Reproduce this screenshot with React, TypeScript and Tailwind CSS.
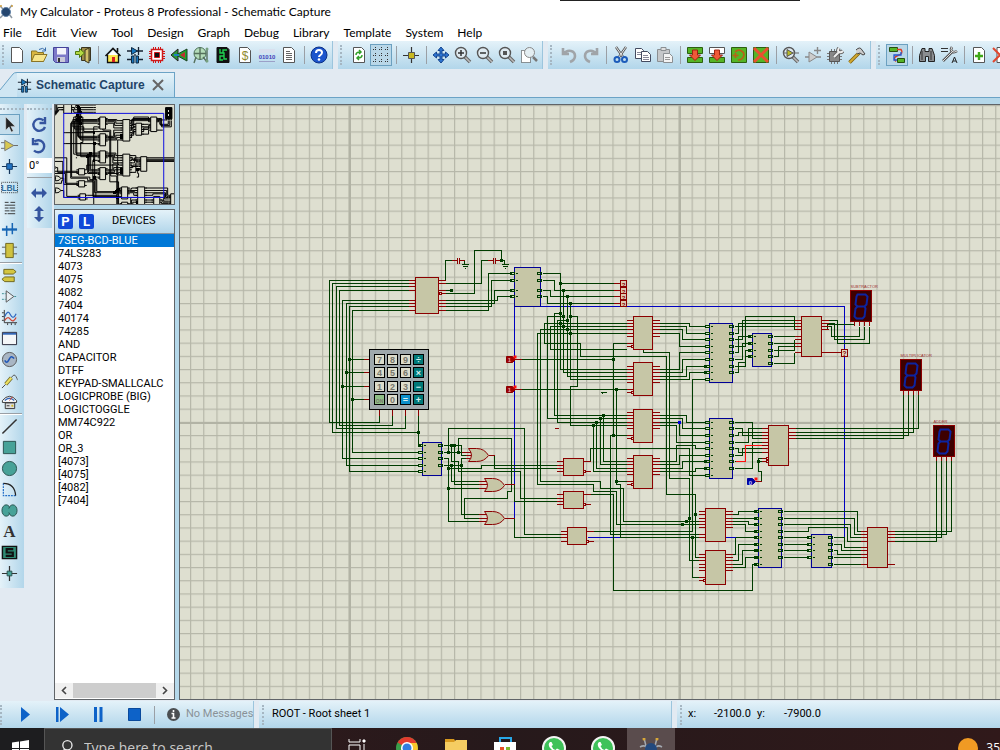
import React, { useState } from 'react';

type Chip = { x: number; y: number; w: number; h: number; left: number[]; right: number[] };

// Schematic parts, in sheet coordinates
const ROWS_9 = [326, 333, 339, 346, 352, 359, 366, 372, 379];
const ROWS_H = [422, 428, 435, 442, 448, 455, 461, 468, 475];
const ROWS_K = [511, 518, 524, 531, 537, 544, 550, 557, 564];

const redChips: Chip[] = [
    { x: 415, y: 277, w: 23, h: 36, left: [280, 283, 286, 290, 300, 303, 306, 310], right: [280, 283, 290, 293, 300, 303, 306, 310] },
    { x: 633, y: 316, w: 19, h: 33, left: [320, 323, 326, 329, 333, 336, 343, 346], right: [320, 323, 326, 329, 333, 336] },
    { x: 633, y: 362, w: 19, h: 33, left: [366, 369, 372, 376, 379, 382, 389, 392], right: [366, 369, 372, 376, 379, 382] },
    { x: 633, y: 409, w: 19, h: 33, left: [412, 415, 418, 422, 425, 428, 435, 438], right: [412, 415, 418, 422, 425, 428] },
    { x: 633, y: 455, w: 19, h: 33, left: [458, 461, 464, 468, 471, 474, 481, 484], right: [458, 461, 464, 468, 471, 474] },
    { x: 801, y: 316, w: 20, h: 40, left: [320, 323, 326, 329, 336, 339, 343, 346, 352], right: [320, 323, 326, 329, 352] },
    { x: 768, y: 425, w: 20, h: 40, left: [428, 432, 435, 438, 442, 445, 448, 452, 458, 461], right: [428, 432, 435, 438] },
    { x: 705, y: 508, w: 20, h: 33, left: [511, 514, 518, 521, 524, 527, 534, 537], right: [511, 514, 518, 521, 524, 527] },
    { x: 705, y: 550, w: 20, h: 34, left: [554, 557, 560, 564, 567, 570, 577, 580], right: [554, 557, 560, 564, 567, 570] },
    { x: 867, y: 527, w: 20, h: 40, left: [531, 534, 537, 541, 547, 550, 554, 557, 564], right: [531, 534, 537, 541, 564] },
    { x: 563, y: 458, w: 20, h: 17, left: [461, 465, 468, 471], right: [461, 471] },
    { x: 563, y: 491, w: 20, h: 17, left: [494, 498, 501, 504], right: [494, 504] },
    { x: 567, y: 527, w: 19, h: 17, left: [531, 534, 537, 541], right: [531, 541] },
];

const blueChips: Chip[] = [
    { x: 422, y: 442, w: 19, h: 33, left: [445, 452, 458, 465, 471], right: [445, 452, 458, 465] },
    { x: 514, y: 267, w: 26, h: 39, left: [273, 280, 290, 296], right: [273, 280, 290, 296] },
    { x: 709, y: 323, w: 23, h: 59, left: ROWS_9, right: ROWS_9.slice(0, 8) },
    { x: 752, y: 333, w: 19, h: 33, left: [336, 343, 350, 356], right: [336, 343, 350, 356, 363] },
    { x: 709, y: 418, w: 23, h: 60, left: ROWS_H, right: ROWS_H.slice(0, 8) },
    { x: 758, y: 508, w: 23, h: 59, left: ROWS_K, right: ROWS_K.slice(0, 8) },
    { x: 811, y: 534, w: 20, h: 33, left: [537, 544, 550, 557], right: [537, 544, 550, 557, 564] },
];

const wires = [
    // keypad bus
    'M408 280H329V422H379V415', 'M408 283H332V432H418', 'M408 286H336V428H405V415', 'M408 290H339V425H392V415',
    'M408 300H342V458H418', 'M408 303H346V465H418', 'M408 306H349V471H418', 'M408 310H352V452H418',
    'M349 359H363', 'M346 372H363', 'M342 386H363', 'M352 399H363', 'M418 415V445H420',
    // encoder outputs
    'M445 280V260H451', 'M445 283H481V260H487', 'M501 260V250H474V293H442', 'M445 290H451', 'M501 260H504V264', 'M464 260V264',
    'M445 300H497V296H511', 'M445 303H494V290H511', 'M445 306H491V280H511', 'M445 310H488V273H511',
    'M543 273H560V369H626', 'M560 283H613', 'M543 280H554V290H613', 'M543 290H550V296H613', 'M543 296H547V303H613',
    'M563 290V372H626', 'M567 296V376H626', 'M570 303V379H626',
    // operand buses
    'M626 323H544V343H580V356H666V494H695V557H699', 'M626 326H550V349H626', 'M643 349V352H669V478H689V560H699',
    'M626 329H540V481H600V488H623V521H699', 'M626 333H537V484H593V491H616V524H699',
    'M560 313H554V415H626', 'M567 320H557V422H626', 'M563 316H547V418H626', 'M570 316H577V386H570V425H626',
    'M521 359H613', 'M626 343H613V435', 'M521 389H626', 'M616 389V481H626', 'M626 435H610V534H699', 'M616 481V484H620V537H699',
    'M603 415V461H626', 'M600 418V464H626', 'M596 422V468H626', 'M593 425V471H626',
    // subtractor
    'M659 323H689V326H705', 'M659 326H686V333H705', 'M659 329H682V339H705', 'M659 333H679V346H705',
    'M659 369H679V352H705', 'M659 372H682V359H705', 'M659 376H686V366H705', 'M659 379H689V372H705',
    'M705 379H692V531H593', 'M692 537V577H699',
    'M735 326H794', 'M735 333H738V323H794', 'M735 339H742V320H794', 'M735 346H745V316H794V329',
    'M735 352H738V336H750', 'M735 359H742V343H750', 'M735 366H738V362H745V350H750', 'M735 372H738V366H745V356H750',
    'M774 336H794', 'M774 343H794', 'M774 350H794V339', 'M774 356H778V346H794', 'M774 363H794V352',
    'M827 320H837V343H869V326', 'M827 323H834V339H864V326', 'M827 326H831V336H859V326', 'M827 329V324H854',
    // multiplicator
    'M659 415H686V422H705', 'M659 418H682V428H705', 'M659 422H679V435H705', 'M659 425H676V442H705',
    'M659 461H676V445H695V448H705', 'M659 464H679V455H705', 'M659 468H682V461H705', 'M659 471H695V468H705',
    'M705 475H689V448H590V461',
    'M735 422H752V438H761', 'M735 428H742V435H761', 'M735 435H738V432H761', 'M735 442H748V428H761',
    'M735 448H738V452H761', 'M735 455H742V448H761', 'M735 468H752V442H761', 'M765 458H758V471H761V481', 'M758 461H765',
    'M794 428H918V394', 'M794 432H913V394', 'M794 435H908V394', 'M794 438H903V394',
    // adder
    'M732 514H738V511H756', 'M732 518H756', 'M732 521H748V524H756', 'M732 524H745V531H756', 'M735 537H756',
    'M732 554H735V537', 'M732 560H738V544H756', 'M732 564H742V550H756', 'M732 567H745V557H756',
    'M590 494H613V590H752V564H756',
    'M784 511H857V531H860', 'M784 518H854V534H860', 'M784 524H850V537H860', 'M784 531H808V527H847V541H860',
    'M784 537H808', 'M784 544H808', 'M784 550H808', 'M784 557H808',
    'M834 537H844V547H860', 'M834 544H841V550H860', 'M834 550H837V554H860', 'M834 557H860', 'M834 564H860',
    'M893 531H951V460', 'M893 534H946V460', 'M893 537H941V460', 'M893 541H936V460',
    // operator selection
    'M444 445H461V455H465', 'M444 452H461', 'M448 452V428H524V534H560', 'M458 452V438H511V491H507V498H464V518H478',
    'M444 458H448V521H478', 'M448 488H478', 'M444 465H461', 'M465 458H461V514H478', 'M454 445V484H478', 'M451 465V481H478',
    'M451 445V461H458V471H520V498H558', 'M494 455V468H558', 'M448 468H481V465H558', 'M514 484V501H558', 'M514 518V537H560',
].join('');

const redWires = [
    'M363 359H369M363 372H369M363 386H369M363 399H369', 'M379 409V415M392 409V415M405 409V415M418 409V415',
    'M451 260H457M457 257V263M459 257V263M459 260H464', 'M487 260H493M493 257V263M495 257V263M495 260H501',
    'M613 283H620M613 290H620M613 296H620M613 303H620', 'M514 359H521M514 389H521',
    'M854 321V325M859 321V325M864 321V325M869 321V325', 'M903 390V394M908 390V394M913 390V394M918 390V394',
    'M936 456V460M941 456V460M946 456V460M951 456V460', 'M827 352H841', 'M755 481H761', 'M554 428H558',
    'M461 452H471M465 455H472M465 458H471M488 455H494', 'M478 481H487M478 484H488M478 488H487M504 484H514',
    'M478 514H487M478 518H488M478 521H487M504 518H514',
].join('');

const dots = [
    [349, 359], [346, 372], [342, 386], [352, 399], [418, 432], [451, 290], [501, 260],
    [560, 283], [563, 290], [567, 296], [570, 303], [560, 313], [563, 316], [567, 320], [570, 316],
    [560, 323], [563, 326], [567, 329], [570, 333], [613, 359], [616, 389], [613, 435], [616, 481],
    [603, 415], [600, 418], [596, 422], [593, 425], [705, 366], [705, 372], [705, 461], [705, 468],
    [695, 514], [689, 518], [686, 521], [682, 524], [692, 537], [756, 550], [756, 557], [758, 461],
    [448, 452], [458, 452], [451, 445], [454, 445], [451, 465], [461, 465], [448, 468], [448, 488],
];

const displays = [
    { x: 850, y: 290, label: 'SUBTRACTOR' },
    { x: 900, y: 359, label: 'MULTIPLICATOR' },
    { x: 933, y: 425, label: 'ADDER' },
];

const keys = ['7', '8', '9', '÷', '4', '5', '6', '×', '1', '2', '3', '−', 'ON', '0', '=', '+'];

const keyFill = (key: string) => {
    if (key === 'ON') return '#8fbf87';
    if (key === '=') return '#0c8fc9';
    return '÷×−+'.includes(key) ? '#007878' : '#dcdccb';
};

const orGates = [[468, 448], [484, 478], [484, 511]];

const Circuit: React.FC = () => (
    <g transform="translate(-179.5 -104.5)" fill="none" fontFamily="Liberation Sans, sans-serif">
        <g shapeRendering="crispEdges" strokeWidth="1">
            <path d="M514 518V306H844V537M725 537H735M587 537H620" stroke="#0000c0" />
            <path d={wires} stroke="#003c00" />
            <path d="M735 461H745V445H761" stroke="#ff1010" />
            <path d={redWires} stroke="#8b0000" />
            <path d="M461 264H468M462 266H467M464 268H465M501 264H508M502 266H507M504 268H505" stroke="#003c00" />
            {redChips.map((c, i) => (
                <g key={i} stroke="#8b0000">
                    <rect x={c.x} y={c.y} width={c.w} height={c.h} fill="#c6c6a6" />
                    <path d={c.left.map((y) => `M${c.x - 7} ${y}H${c.x}`).join('')} />
                    <path d={c.right.map((y) => `M${c.x + c.w} ${y}h7`).join('')} />
                </g>
            ))}
            {blueChips.map((c, i) => (
                <g key={i}>
                    <rect x={c.x} y={c.y} width={c.w} height={c.h} fill="#c6c6a6" stroke="#000096" />
                    {c.left.map((y) => <path key={y} d={`M${c.x - 4} ${y - 1}h4v2h-4zM${c.x + 1} ${y}h2`} stroke="#003c00" />)}
                    {c.right.map((y) => <path key={y} d={`M${c.x + c.w - 3} ${y - 1}h4v2h-4zM${c.x + c.w + 2} ${y}h1`} stroke="#003c00" />)}
                </g>
            ))}
            <g stroke="#8b0000" fill="#dedfd0">
                <path d="M439 292h2v2h-2zM631 345h2v2h-2zM631 391h2v2h-2zM631 437h2v2h-2zM631 483h2v2h-2zM583 470h2v2h-2zM583 503h2v2h-2zM586 540h2v2h-2zM703 579h2v2h-2zM766 457h2v2h-2zM766 460h2v2h-2z" />
            </g>
            {dots.map(([x, y]) => <rect key={`${x}-${y}`} x={x - 1.5} y={y - 1.5} width="3" height="3" fill="#003c00" />)}
            <rect x="677.5" y="420.5" width="3" height="3" fill="#0000e0" />
            <path d="M600 392h6M602 391v2" stroke="#003c00" />
            <rect x="369" y="349" width="59" height="60" fill="#9fa8ac" stroke="#000" />
        </g>
        {orGates.map(([x, y]) => (
            <path key={`${x}-${y}`} d={`M${x} ${y}h8q8 0 12 7q-4 6-12 6h-8q6-6 0-13z`} fill="#c6c6a6" stroke="#8b0000" />
        ))}
        {keys.map((key, i) => {
            const x = 374 + (i % 4) * 13;
            const y = [354, 367, 381, 394][Math.floor(i / 4)];
            const dark = '÷×−+='.includes(key);
            return (
                <g key={key}>
                    <rect x={x} y={y} width="10" height="10" fill={keyFill(key)} stroke="#000" shapeRendering="crispEdges" />
                    <text x={x + 5} y={y + 8} fontSize={key === 'ON' ? 5 : 9} fontWeight="bold" textAnchor="middle" fill={dark ? '#d8f0f0' : '#77776c'}>{key}</text>
                </g>
            );
        })}
        {[280, 287, 293, 300].map((y) => (
            <g key={y}>
                <rect x="620" y={y} width="6" height="6" fill="#dcc8b0" stroke="#8b0000" shapeRendering="crispEdges" />
                <text x="623" y={y + 6} fontSize="6" fontWeight="bold" textAnchor="middle" fill="#8b0000">?</text>
            </g>
        ))}
        <rect x="841" y="349" width="6" height="7" fill="#e0d8c0" stroke="#8b0000" shapeRendering="crispEdges" />
        <text x="844" y="355" fontSize="7" fontWeight="bold" textAnchor="middle" fill="#8b0000">?</text>
        {[359, 389].map((y) => (
            <g key={y}>
                <path d={`M506 ${y - 3}h6l3 3l-3 3h-6z`} fill="#a00000" stroke="#8b0000" />
                <text x="509" y={y + 2} fontSize="6" fontWeight="bold" textAnchor="middle" fill="#e0a0a0">1</text>
                <rect x="513" y={y - 4} width="3" height="3" fill="#ff1010" />
            </g>
        ))}
        <path d="M747 478h5l3 3l-3 3h-5z" fill="#0000a0" stroke="#0000a0" />
        <text x="750" y="484" fontSize="6" fontWeight="bold" textAnchor="middle" fill="#c0c0ff">0</text>
        <rect x="754" y="477" width="3" height="3" fill="#ff1010" />
        {displays.map((d) => (
            <g key={d.label}>
                <rect x={d.x} y={d.y} width="21" height="31" fill="#3e0000" stroke="#8b0000" shapeRendering="crispEdges" />
                <path d={`M${d.x + 7} ${d.y + 4}h8l2 2l-1 8l-2 2l1 2l-1 8l-2 2h-6l-2-2l1-8l2-2l-2-2l1-8zM${d.x + 7} ${d.y + 16}h7`} stroke="#0c24a0" strokeWidth="2" />
                <text x={d.x} y={d.y - 3} fontSize="4" fill="#9c3030">{d.label}</text>
            </g>
        ))}
    </g>
);

const Overview: React.FC = () => (
    <svg className="block h-full w-full bg-[#dedfd0]" fill="none" stroke="#000" shapeRendering="crispEdges">
        <g transform="translate(-147 -103) scale(.303 .364)">
            <path d={wires} vectorEffect="non-scaling-stroke" />
            <path d={redWires} vectorEffect="non-scaling-stroke" />
            {[...redChips, ...blueChips].map((c, i) => (
                <g key={i}>
                    <rect x={c.x} y={c.y} width={c.w} height={c.h} fill="#dedfd0" vectorEffect="non-scaling-stroke" />
                    <path d={[...c.left.map((y) => `M${c.x - 7} ${y}h7`), ...c.right.map((y) => `M${c.x + c.w} ${y}h7`)].join('')} vectorEffect="non-scaling-stroke" />
                </g>
            ))}
            {dots.map(([x, y], i) => <rect key={i} x={x - 4} y={y - 4} width="8" height="8" fill="#000" stroke="none" />)}
            {displays.map((d) => (
                <g key={d.label}>
                    <rect x={d.x} y={d.y} width="21" height="31" fill="#000" vectorEffect="non-scaling-stroke" />
                    <path d={`M${d.x + 7} ${d.y + 8}h6v5h-6zM${d.x + 7} ${d.y + 18}h6v5h-6z`} fill="#dedfd0" stroke="none" />
                </g>
            ))}
            {orGates.map(([x, y]) => <path key={y} d={`M${x} ${y}h8q8 0 12 7q-4 6-12 6h-8q6-6 0-13z`} vectorEffect="non-scaling-stroke" />)}
            <path d="M514 306H844V537H514z" stroke="#1010e0" vectorEffect="non-scaling-stroke" />
        </g>
    </svg>
);

const Svg: React.FC<{ size?: number; children: React.ReactNode }> = ({ size = 18, children }) => (
    <svg width={size} height={size} viewBox="0 0 18 18" fill="none" aria-hidden="true">{children}</svg>
);

const page = <path d="M3.500 1.500h8l3 3v12h-11z" fill="#fff" stroke="#555" />;
const lens = <><path d="M11 11l5 5" stroke="#666" strokeWidth="3.500" /><path d="M11 11l5 5" stroke="#bbb" strokeWidth="1.500" /><circle cx="7" cy="7" r="5.500" fill="#dfeaf0" stroke="#555" strokeWidth="1.400" /></>;
const darkCap = <><path d="M1 5h16M12.500 1v8M1 13.500h5M12 13.500h5M9 8v2" stroke="#152030" strokeWidth="1.300" /><path d="M5.500 1.500v7l6-3.500z" fill="#1878c0" stroke="#102840" /><path d="M5.500 10h2.500v7H5.500zM10 10h2.500v7H10z" fill="#1878c0" stroke="#102840" /></>;

const icons: Record<string, React.ReactNode> = {
    'New Project': page,
    'Open Project': <><path d="M1.500 15.500V5h5l1 1.500h6v9z" fill="#d9b640" stroke="#8a7426" /><path d="M1.500 15.500l3-7H17l-3.500 7z" fill="#f7e58b" stroke="#8a7426" /><path d="M9 3.500q4-2.500 6 .5M15.500 1.500V5H12" stroke="#386aa8" /></>,
    'Save Project': <><path d="M1.500 1.500h15v15h-13l-2-2z" fill="#7d7ac8" stroke="#45439a" /><path d="M5 2h9v6.500H5z" fill="#f4f4fb" /><path d="M5 11h8v5H5z" fill="#c9c9d8" /><path d="M6 12h2v4H6z" fill="#333" /></>,
    'Close Project': <><path d="M7.500 1.500h9v13h-9z" fill="#9c8c48" stroke="#3a3420" /><path d="M11 4l4-2v15l-4-2z" fill="#d2c06a" stroke="#3a3420" /><path d="M1.500 5.500h4V2.500l5 4.500-5 4.500V8.500h-4z" fill="#b4d844" stroke="#4f7a10" /></>,
    Home: <><path d="M9 4.500l-5 5h10z" fill="#fff" /><path d="M3.500 9V16.500h11V9" fill="#fbe850" stroke="#111" strokeWidth="1.300" /><path d="M1.500 10L9 2.500l7.500 7.500M13.500 2v4" stroke="#111" strokeWidth="1.600" /><path d="M8 11h3v5H8z" fill="#d82020" /></>,
    'Schematic Capture': darkCap,
    'PCB Layout': <><path d="M5.500 1v16M7.500 1v16M10.500 1v16M12.500 1v16M1 5.500h16M1 7.500h16M1 10.500h16M1 12.500h16" stroke="#d01818" /><path d="M3.500 3.500h11v11h-11z" fill="#fff" stroke="#d01818" strokeWidth="1.500" /><path d="M6.500 6.500h5v5h-5z" fill="#111" stroke="#d01818" /></>,
    '3D Visualizer': <><path d="M1 9l7-6v12z" fill="#2a9c38" stroke="#222" /><path d="M6 9L17 3v12z" fill="#20a52c" stroke="#1a4020" /><path d="M10 9l5-3v6z" fill="#c03030" /><path d="M4 9h5" stroke="#2080c0" strokeWidth="2" /></>,
    'Gerber Viewer': <><circle cx="8" cy="7.500" r="6" fill="#b4dcba" stroke="#4b7158" /><path d="M8 1.500v12M2 7.500h12M4 11l-2 6M11 11l4 5M15 2v12" stroke="#55705c" strokeWidth="1.400" /><circle cx="15" cy="3" r="1.500" fill="#77a080" /><circle cx="15" cy="15" r="1.500" fill="#77a080" /></>,
    'Design Explorer': <><path d="M3 1.500h10l2 2v13H3z" fill="#111" stroke="#111" /><path d="M6 3v4h4v3H6v4h3M9 7V4h4M10 10v3h3" stroke="#20d050" strokeWidth="1.400" /></>,
    'Bill of Materials': <>{page}<text x="9" y="14" fontSize="12" fontFamily="Liberation Sans, sans-serif" textAnchor="middle" fill="#908a30">$</text></>,
    'Source Code': <><path d="M1 3h16v4H1z" fill="#d8e0ee" /><path d="M1 15.500h16" stroke="#9ba0c8" /><text x="9" y="13" fontSize="6" fontFamily="Liberation Sans, sans-serif" fontWeight="bold" textAnchor="middle" fill="#4340b8">01010</text></>,
    'Project Notes': <>{page}<path d="M6 5.500h4M6 7.500h6M6 9.500h6M6 11.500h6M6 13.500h6" stroke="#666" /></>,
    Help: <><circle cx="9" cy="9" r="8" fill="#1c55cc" stroke="#0b3186" /><path d="M6 7q0-3 3-3t3 2.500q0 1.500-1.500 2.500T9 11" stroke="#fff" strokeWidth="2" /><circle cx="9" cy="13.500" r="1.300" fill="#fff" /></>,
    'Redraw Display': <>{page}<path d="M6 9q0-3 4-3M9 4l2 2-2 2M12 9q0 3-4 3M9 10l-2 2 2 2" stroke="#30a028" strokeWidth="1.500" /></>,
    'Toggle Grid': <path d="M1 3.500h16M1 9.500h16M1 15.500h16M3.500 1v16M9.500 1v16M15.500 1v16" stroke="#333" strokeDasharray="1 1 1 3" />,
    'Toggle Origin': <><path d="M9.500 1v16M1 9.500h16" stroke="#333" strokeWidth="1.200" /><path d="M6.500 6.500h6v6h-6z" fill="#c8b820" stroke="#555" /></>,
    Pan: <path d="M9 1l3 3.500h-2V8h3.500V6L17 9l-3.500 3v-2H10v3.500h2L9 17l-3-3.500h2V10H4.500v2L1 9l3.500-3v2H8V4.500H6z" fill="#2d74d2" stroke="#16468e" />,
    'Zoom In': <>{lens}<path d="M4 7h6M7 4v6" stroke="#333" strokeWidth="1.500" /></>,
    'Zoom Out': <>{lens}<path d="M4 7h6" stroke="#333" strokeWidth="1.500" /></>,
    'Zoom All': <>{lens}<path d="M5 5h4v4H5z" fill="#555" /></>,
    'Zoom Area': <><path d="M1.500 4.500h9v12h-9z" fill="#fff" stroke="#333" strokeDasharray="1 1" /><path d="M13 11l4 4" stroke="#777" strokeWidth="2.500" /><circle cx="9.500" cy="6.500" r="5" fill="#e4eef2" stroke="#888" /></>,
    Undo: <path d="M3 2v6h6M3.500 8q3-4 7.500-3q4 1 4 5t-5 6" stroke="#a0a4a8" strokeWidth="2.600" />,
    Redo: <path d="M15 2v6H9M14.500 8q-3-4-7.500-3q-4 1-4 5t5 6" stroke="#a0a4a8" strokeWidth="2.600" />,
    Cut: <><path d="M4 1l7 10M14 1L7 11" stroke="#555" strokeWidth="2.400" /><path d="M4 1l7 10M14 1L7 11" stroke="#e8e8e8" /><circle cx="5" cy="13.500" r="2.500" stroke="#1d5cba" strokeWidth="2" /><circle cx="12.500" cy="13.500" r="2.500" stroke="#1d5cba" strokeWidth="2" /></>,
    Copy: <><path d="M1.500 2.500h6l2 2v8h-8z" fill="#fff" stroke="#444b60" /><path d="M3 6.500h4M3 8.500h4" stroke="#889" /><path d="M7.500 5.500h6l3 3v7h-9z" fill="#fff" stroke="#444b60" /><path d="M9 9.500h5M9 11.500h6M9 13.500h6" stroke="#889" /></>,
    Paste: <><path d="M1.500 3.500h12v12h-12z" fill="#c5c7c9" stroke="#8b8f92" /><path d="M5 1.500h5v3H5z" fill="#e0e0e0" stroke="#8b8f92" /><path d="M7.500 7.500h6l3 3v6h-9z" fill="#f3f3f3" stroke="#8b8f92" /><path d="M9 11.500h5M9 13.500h5" stroke="#999" /></>,
    'Block Copy': <><path d="M1.500 1.500h15v6h-15zM1.500 11.500h15v5h-15z" fill="#55b526" stroke="#2c6010" /><path d="M6.500 4h5v5h3L9 14.500 3.500 9h3z" fill="#f05a38" stroke="#9e2410" /></>,
    'Block Move': <><path d="M1.500 1.500h15v6h-15z" fill="#fff" stroke="#555" /><path d="M1.500 11.500h15v5h-15z" fill="#55b526" stroke="#2c6010" /><path d="M6.500 4h5v5h3L9 14.500 3.500 9h3z" fill="#f05a38" stroke="#9e2410" /></>,
    'Block Rotate': <><path d="M1.500 1.500h15v15h-15z" fill="#55b526" stroke="#2c6010" /><path d="M5 6q3-3 6.500-1t2 5.500-5.500 3.500M2.500 9.500h6M5.500 7v5" stroke="#b86018" strokeWidth="1.700" /></>,
    'Block Delete': <><path d="M1.500 1.500h15v15h-15z" fill="#55b526" stroke="#2c6010" /><path d="M2 2l14 14M16 2L2 16" stroke="#ea5030" strokeWidth="3" /></>,
    'Pick Parts': <>{lens}<path d="M5 3.500v7l6-3.500z" fill="#b7ba28" stroke="#555" /><path d="M1 7h4M11 7h6" stroke="#666" /></>,
    'Make Device': <><path d="M5 6v10l8-5z" fill="#ccc" stroke="#888" /><path d="M1 11h4M13 11h4M13.500 1v7M10 4.500h7" stroke="#888" strokeWidth="1.400" /></>,
    'Packaging Tool': <><path d="M5.500 3v15M8.500 3v15M11.500 3v15M1 7.500h15M1 10.500h15M1 13.500h15" stroke="#777" /><path d="M3.500 5.500h10v10h-10z" fill="#888" stroke="#555" /><path d="M8 11l5-5M13 2q-2 3 0 4t4-1" stroke="#666" strokeWidth="4" /><path d="M8 11l5-5M13 2q-2 3 0 4t4-1" stroke="#eee" strokeWidth="2" /></>,
    Decompose: <><path d="M1.500 16.500L11 7" stroke="#80610c" strokeWidth="3.500" /><path d="M1.500 16.500L11 7" stroke="#d3aa32" strokeWidth="1.800" /><path d="M8 4q4-4 6 0l3 4-2 1-3-2-3 1" fill="#ccc" stroke="#444" /></>,
    'Wire Autorouter': <><path d="M1.500 1.500h8v4h-8zM9.500 12.500h7v4h-7z" fill="#55b526" stroke="#24500c" /><path d="M9 3.500h4q3 4-3 6t-2 6" stroke="#e03c20" strokeWidth="1.400" /><path d="M13 6v3H6v5h3" stroke="#2058d0" strokeWidth="1.300" /></>,
    'Search and Tag': <><path d="M4 2.500h3v3h4v-3h3l2.500 7v6h-6v-5h-3v5h-6v-6z" fill="#8a8d90" stroke="#222" /><path d="M4 5v9M13 5v9" stroke="#333" /></>,
    'Property Assignment': <><path d="M1 2.500h7M1 5.500h7" stroke="#333" strokeWidth="1.200" /><path d="M3 15l10-10M12 1q-2 3 0 4.500t5-.5" stroke="#555" strokeWidth="2.600" /><path d="M3 15l10-10M12 1q-2 3 0 4.500t5-.5" stroke="#ddd" /><path d="M12 17l2.500-6 2.500 6M13 15h3" stroke="#222" /></>,
    'New Root Sheet': <>{page}<path d="M9 6v8M5 10h8" stroke="#40a818" strokeWidth="2.400" /></>,
    'Delete Sheet': <><path d="M5 1.500h7v15H5z" fill="#fff" stroke="#555" /><path d="M1 2l14 14M15 2L1 16" stroke="#e04830" strokeWidth="2" /></>,
    Selection: <path d="M5 1v14l3.500-3.500L11 17l2-1-2.500-5H15z" fill="#222" stroke="#eee" strokeWidth=".5" />,
    Component: <><path d="M0 6h4M0 12h4M13 9h5" stroke="#666" /><path d="M4 3.500v11L13.500 9z" fill="#d8c850" stroke="#777" /></>,
    'Junction Dot': <><path d="M9 1v16M1 9h16" stroke="#15375c" strokeWidth="1.300" /><path d="M6 6h6v6H6z" fill="#2274c4" stroke="#153c68" /></>,
    'Wire Label': <><path d="M.5 3.500h17v11H.5z" stroke="#333" strokeDasharray="1 1" /><text x="9" y="13" fontSize="9" fontFamily="Liberation Sans, sans-serif" fontWeight="bold" textAnchor="middle" fill="#2f6c9c">LBL</text></>,
    'Text Script': <path d="M4 2.500h4M10 2.500h5M4 5.500h11M4 8.500h4M9 8.500h6M4 11.500h5M10 11.500h5M4 14.500h2M7 14.500h8" stroke="#333" />,
    Bus: <><path d="M1 9h16" stroke="#1866b4" strokeWidth="2.500" /><path d="M6 9v7M12 9V2M12 9v5M6 9V5" stroke="#1866b4" strokeWidth="1.600" /></>,
    Subcircuit: <><path d="M1 5.500h4M1 12.500h4M13 5.500h4M13 12.500h4" stroke="#555" /><path d="M5 1.500h8v15H5z" fill="#cfc240" stroke="#6b6420" /></>,
    Terminals: <path d="M3 2.500h10l3 2.500-3 2.500H3zM14 10.500H4l-3 2.500 3 2.500h10z" fill="#d4c640" stroke="#6b6420" />,
    'Device Pins': <><path d="M5.500 3v12l8-6z" fill="#e8eef2" stroke="#555" /><path d="M1 6h4M1 12h4M14 9h3" stroke="#3b8c90" strokeDasharray="2 1" /></>,
    Graph: <><path d="M3.500 1v13.500H17M1 4h2M1 8h2M1 12h2M7 15v2M11 15v2M15 15v2" stroke="#333" /><path d="M4 8q3-8 6-2t6-1" stroke="#2c66c0" strokeWidth="1.300" /><path d="M4 12q3-5 6-1t6-2" stroke="#d04030" strokeWidth="1.300" /></>,
    'Active Popup': <><path d="M1.500 2.500h15v13h-15z" fill="#f4f6f8" stroke="#223" /><path d="M2 4h14" stroke="#3568b8" strokeWidth="2" /></>,
    Generator: <><circle cx="9" cy="9" r="7.500" fill="#a9b6c4" stroke="#555" /><path d="M4 10q2 4 4 0t3-4 3 2" stroke="#2058b8" strokeWidth="1.600" /></>,
    Probe: <><path d="M1 17l4-4" stroke="#444" /><path d="M5 13l6-7" stroke="#6b6420" strokeWidth="4" /><path d="M5 13l6-7" stroke="#ecdf60" strokeWidth="2.500" /><path d="M11 6q3-5 5-1t1 3" stroke="#555" /></>,
    Instruments: <><path d="M1.500 8q7.500-9 15 0v2h-15z" fill="#fff" stroke="#333" /><path d="M4 8q5-5 10 0" stroke="#3568b8" strokeWidth="1.400" /><path d="M9 8l3-4" stroke="#d04030" /><path d="M4.500 10.500h10v6h-10z" fill="#dcdcdc" stroke="#333" /><path d="M6 13.500h3" stroke="#333" /><path d="M11 13.500h2" stroke="#d0b820" strokeWidth="2" /></>,
    Line: <path d="M1.500 16.500l15-15" stroke="#333" strokeWidth="1.600" />,
    Box: <path d="M2.500 2.500h13v13h-13z" fill="#47a298" stroke="#29504c" />,
    Circle: <circle cx="9" cy="9" r="7.500" fill="#47a298" stroke="#29504c" />,
    Arc: <><path d="M2.500 2.500v13h13" stroke="#2470c8" strokeWidth="1.300" strokeDasharray="2 1" /><path d="M2.500 2.500q12 0 13 13" stroke="#222" strokeWidth="1.300" /></>,
    'Closed Path': <><ellipse cx="5.500" cy="9" rx="4.500" ry="6" fill="#47a298" stroke="#29504c" /><ellipse cx="12.500" cy="9" rx="4.500" ry="6" fill="#47a298" stroke="#29504c" /><path d="M7 7h3v4H7z" fill="#47a298" /></>,
    Text: <text x="9" y="15" fontSize="18" fontFamily="Liberation Serif, serif" fontWeight="bold" textAnchor="middle" fill="#333">A</text>,
    Symbols: <><path d="M1.500 2.500h15v13h-15z" fill="#2f8c74" stroke="#111" strokeWidth="1.500" /><path d="M13 5.500H6v3.500h6.500v3.500H5" stroke="#111" strokeWidth="2.300" /></>,
    Markers: <><path d="M9 1v16M1 9h16" stroke="#333" strokeWidth="1.300" /><path d="M6.500 6.500h5v5h-5z" fill="#47a298" stroke="#29504c" /></>,
    'Rotate Clockwise': <path d="M13.500 4.500A6 6 0 1 0 15 11M15 1v6H9.500" stroke="#35559f" strokeWidth="2.400" />,
    'Rotate Anticlockwise': <path d="M4.500 4.500A6 6 0 1 1 4 13.500M3 1v6h5.500" stroke="#35559f" strokeWidth="2.400" />,
    'Mirror X': <path d="M1 9l5-5v3.500h6V4l5 5-5 5v-3.500H6V14z" fill="#35559f" />,
    'Mirror Y': <path d="M9 1l5 5h-3.500v6H14l-5 5-5-5h3.500V6H4z" fill="#35559f" />,
};

const toolbars = [
    { pad: 'pl-[6px]', tools: ['New Project', 'Open Project', 'Save Project', 'Close Project', '|', 'Home', 'Schematic Capture', 'PCB Layout', '3D Visualizer', 'Gerber Viewer', 'Design Explorer', 'Bill of Materials', 'Source Code', 'Project Notes', '|', 'Help'] },
    { pad: 'pl-[10px]', tools: ['Redraw Display', 'Toggle Grid', '|', 'Toggle Origin', '|', 'Pan', 'Zoom In', 'Zoom Out', 'Zoom All', 'Zoom Area'] },
    { pad: 'pl-[10px]', tools: ['Undo', 'Redo', '|', 'Cut', 'Copy', 'Paste', '|', 'Block Copy', 'Block Move', 'Block Rotate', 'Block Delete', '|', 'Pick Parts', 'Make Device', 'Packaging Tool', 'Decompose'] },
    { pad: 'pl-[10px]', tools: ['Wire Autorouter', '|', 'Search and Tag', 'Property Assignment', '|', 'New Root Sheet', 'Delete Sheet'] },
];

const modeTools = ['Selection', 'Component', 'Junction Dot', 'Wire Label', 'Text Script', 'Bus', 'Subcircuit', '|', 'Terminals', 'Device Pins', 'Graph', 'Active Popup', 'Generator', 'Probe', 'Instruments', '|', 'Line', 'Box', 'Circle', 'Arc', 'Closed Path', 'Text', 'Symbols', 'Markers'];

const menus = ['File', 'Edit', 'View', 'Tool', 'Design', 'Graph', 'Debug', 'Library', 'Template', 'System', 'Help'];

const devices = ['7SEG-BCD-BLUE', '74LS283', '4073', '4075', '4082', '7404', '40174', '74285', 'AND', 'CAPACITOR', 'DTFF', 'KEYPAD-SMALLCALC', 'LOGICPROBE (BIG)', 'LOGICTOGGLE', 'MM74C922', 'OR', 'OR_3', '[4073]', '[4075]', '[4082]', '[7404]'];

const bar = 'bg-linear-to-b from-[#e4f2f9] to-[#b2d6ea]';
const grip = 'border-l-2 border-dotted border-[#a5b6c2]';

const ProteusLogo: React.FC = () => (
    <svg width="16" height="16" viewBox="0 0 16 16" fill="none" aria-hidden="true">
        <path d="M2 2l4 4M14 1l-3 4M2 14l4-4M14 14l-3-4" stroke="#8d98a3" strokeWidth="1.500" />
        <circle cx="8" cy="8" r="4.500" fill="#25466f" stroke="#6283a8" />
        <circle cx="3" cy="2" r="1" fill="#d0a040" /><circle cx="14" cy="2" r="1" fill="#d0a040" />
    </svg>
);

const App: React.FC = () => {
    const [device, setDevice] = useState('7SEG-BCD-BLUE');
    const [mode, setMode] = useState('Selection');

    return (
        <div className="relative flex h-screen flex-col overflow-hidden bg-[#e2eaf2] font-['Liberation_Sans',sans-serif] text-xs text-black">
            <div className="absolute top-0 left-[56%] h-px w-[24%] bg-[#222]" />

            {/* Title and menu */}
            <header className="shrink-0 bg-white font-['Lato',sans-serif]">
                <div className="flex h-6 items-center gap-1">
                    <span className="-ml-[2px]"><ProteusLogo /></span>
                    <h1 className="pl-[2px] text-xs">My Calculator - Proteus 8 Professional - Schematic Capture</h1>
                </div>
                <nav className="flex h-[17px] items-center gap-[14px] pl-[3px]">
                    {menus.map((m) => <button key={m} type="button" className="leading-4">{m}</button>)}
                </nav>
            </header>

            {/* Toolbars */}
            <div className="flex h-7 shrink-0 gap-[5px] overflow-hidden">
                {toolbars.map((tb, i) => (
                    <div key={i} className={`relative flex shrink-0 items-center border-r border-[#9cc5dd] pr-[2px] ${bar} ${tb.pad}`}>
                        <span className={`absolute top-1 bottom-1 left-[2px] ${grip}`} />
                        {tb.tools.map((t, j) => t === '|' ? (
                            <span key={j} className="flex w-2 justify-center"><span className="h-[18px] w-px bg-[#9a9fa5]" /></span>
                        ) : (
                            <button
                                key={t}
                                type="button"
                                aria-label={t}
                                className={t === 'Toggle Grid' || t === 'Wire Autorouter' ? 'flex h-[22px] w-[22px] items-center justify-center border border-[#6ba0c0] bg-[#b9d7e8]' : 'flex h-[22px] w-[22px] items-center justify-center'}
                            >
                                <Svg>{icons[t]}</Svg>
                            </button>
                        ))}
                    </div>
                ))}
            </div>

            {/* Document tab */}
            <div className="flex h-[29px] shrink-0 items-end border-b border-[#6ba3c6]">
                <svg width="17" height="25" viewBox="0 0 17 25" aria-hidden="true">
                    <path d="M0 18L13 2q1-1.500 4-1.500V25H0z" fill="#cfe6f3" />
                    <path d="M0 18L13 2q1-1.500 4-1.500" fill="none" stroke="#6ba3c6" />
                </svg>
                <div className="flex h-[25px] items-center gap-1 border-t border-r border-[#6ba3c6] bg-linear-to-b from-[#e4f2f9] to-[#bcdcee] pr-[10px]">
                    <Svg size={15}>{darkCap}</Svg>
                    <span className="font-bold text-[#1f4468]">Schematic Capture</span>
                    <button type="button" aria-label="Close tab" className="pl-[3px]">
                        <svg width="12" height="12" viewBox="0 0 12 12" stroke="#666" strokeWidth="2"><path d="M1 1l10 10M11 1L1 11" /></svg>
                    </button>
                </div>
            </div>
            <div className="h-[6px] shrink-0 bg-[#b5d8ea]" />

            {/* Workspace */}
            <main className="flex min-h-0 flex-1">
                <aside className="flex w-[54px] shrink-0 items-start gap-[3px]">
                    <div className="flex w-6 flex-col bg-linear-to-r from-[#e4f2f9] to-[#b2d6ea] pb-1">
                        <span className="my-1 h-[2px] border-t-2 border-dotted border-[#a5b6c2]" />
                        {modeTools.map((t, i) => t === '|' ? (
                            <span key={i} className="my-px mr-[2px] h-[2px] border-t border-[#9a9fa5] bg-white" />
                        ) : (
                            <button
                                key={t}
                                type="button"
                                aria-label={t}
                                onClick={() => setMode(t)}
                                className={t === mode ? 'flex h-[21px] w-5 items-center justify-center border border-l-0 border-[#6ba0c0] bg-[#c4deec]' : 'flex h-[21px] w-[18px] items-center justify-center'}
                            >
                                <Svg size={17}>{icons[t]}</Svg>
                            </button>
                        ))}
                    </div>
                    <div className="flex w-[25px] flex-col items-center bg-linear-to-r from-[#e4f2f9] to-[#b2d6ea] pb-1">
                        <span className="my-1 h-[2px] w-full border-t-2 border-dotted border-[#a5b6c2]" />
                        {['Rotate Clockwise', 'Rotate Anticlockwise'].map((t) => (
                            <button key={t} type="button" aria-label={t} className="flex h-[21px] items-center pr-[2px]"><Svg>{icons[t]}</Svg></button>
                        ))}
                        <input aria-label="Rotation angle" defaultValue="0°" className="mt-[2px] h-[15px] w-full bg-white pl-[2px] font-['Roboto',sans-serif] text-[11px]" />
                        <span className="my-1 h-px w-full bg-[#9a9fa5]" />
                        {['Mirror X', 'Mirror Y'].map((t) => (
                            <button key={t} type="button" aria-label={t} className="flex h-[21px] items-center pr-[2px]"><Svg>{icons[t]}</Svg></button>
                        ))}
                    </div>
                </aside>

                <div className="flex w-[125px] shrink-0 flex-col gap-1 bg-[#b5d8ea] pr-1">
                    <div className="h-[101px] shrink-0 overflow-hidden border border-[#606468]">
                        <Overview />
                    </div>
                    <section className="flex min-h-0 flex-1 flex-col border border-[#606468] bg-white">
                        <div className={`flex h-6 shrink-0 items-center gap-[6px] border-b border-[#8a9299] pl-[3px] font-['Roboto',sans-serif] ${bar}`}>
                            <button type="button" className="h-[15px] w-[15px] rounded-[2px] bg-[#1048d8] text-[13px] leading-[15px] font-bold text-white">P</button>
                            <button type="button" className="h-[15px] w-[15px] rounded-[2px] bg-[#1048d8] text-[13px] leading-[15px] font-bold text-white">L</button>
                            <h2 className="pl-3 text-[11px]">DEVICES</h2>
                        </div>
                        <ul className="flex-1 overflow-hidden font-['Roboto',sans-serif] text-[11px] leading-[13px]">
                            {devices.map((d) => (
                                <li key={d}>
                                    <button
                                        type="button"
                                        onClick={() => setDevice(d)}
                                        className={d === device ? 'block w-full bg-[#0078d7] pl-[3px] text-left text-white' : 'block w-full pl-[3px] text-left'}
                                    >
                                        {d}
                                    </button>
                                </li>
                            ))}
                        </ul>
                        <div className="mb-px flex h-[15px] shrink-0 bg-[#f0f0f0]">
                            <button type="button" aria-label="Scroll left" className="flex w-[18px] items-center justify-center">
                                <svg width="6" height="9" viewBox="0 0 6 9" fill="none" stroke="#444" strokeWidth="1.600"><path d="M5 1L1.500 4.500 5 8" /></svg>
                            </button>
                            <span className="flex-1 bg-[#cdcdcd]" />
                            <button type="button" aria-label="Scroll right" className="flex w-[18px] items-center justify-center">
                                <svg width="6" height="9" viewBox="0 0 6 9" fill="none" stroke="#444" strokeWidth="1.600"><path d="M1 1l3.500 3.500L1 8" /></svg>
                            </button>
                        </div>
                    </section>
                </div>

                <div className="min-w-0 flex-1 overflow-hidden border border-r-0 border-[#606468]">
                    <svg className="block h-full w-full bg-[#dedfd0]" role="img" aria-label="Calculator schematic">
                        <defs>
                            <pattern id="grid" x="10" y="0" width="13.200" height="13.200" patternUnits="userSpaceOnUse">
                                <path d="M.6 0V13.200M0 .6H13.200" stroke="#b6b7a9" strokeWidth="1.200" />
                            </pattern>
                            <pattern id="major" x="169" y="317" width="330" height="330" patternUnits="userSpaceOnUse">
                                <path d="M.5 0V330M0 .5H330" stroke="#b2b3a5" strokeWidth="3" />
                            </pattern>
                        </defs>
                        <rect width="100%" height="100%" fill="url(#grid)" />
                        <rect width="100%" height="100%" fill="url(#major)" />
                        <Circuit />
                    </svg>
                </div>
            </main>

            {/* Simulation controls and status */}
            <footer className="mt-px flex h-[27px] shrink-0 gap-[5px] font-['Roboto',sans-serif] text-[11px]">
                <div className={`flex w-[254px] shrink-0 items-center border-r border-[#9cc5dd] ${bar}`}>
                    <span className={`h-5 shrink-0 ${grip}`} />
                    <button type="button" aria-label="Run" className="flex w-[42px] shrink-0 justify-center pl-1"><svg width="9" height="15" viewBox="0 0 9 15"><path d="M0 0l9 7.500L0 15z" fill="#0d62c8" /></svg></button>
                    <button type="button" aria-label="Step" className="flex w-9 shrink-0 justify-center"><svg width="13" height="15" viewBox="0 0 13 15"><path d="M0 0h2.500v15H0zM4 0l9 7.500L4 15z" fill="#0d62c8" /></svg></button>
                    <button type="button" aria-label="Pause" className="flex w-9 shrink-0 justify-center"><svg width="9" height="15" viewBox="0 0 9 15"><path d="M0 0h3v15H0zM5.500 0h3v15h-3z" fill="#0d62c8" /></svg></button>
                    <button type="button" aria-label="Stop" className="flex w-9 shrink-0 justify-center"><svg width="13" height="13" viewBox="0 0 13 13"><path d="M.5.5h12v12H.5z" fill="#0d62c8" stroke="#0a4a9c" /></svg></button>
                    <span className="mr-3 ml-[2px] h-[18px] w-px shrink-0 bg-[#9a9fa5]" />
                    <svg width="13" height="13" viewBox="0 0 13 13" className="shrink-0" aria-hidden="true"><circle cx="6.500" cy="6.500" r="6.500" fill="#4c4f52" /><path d="M6.500 2v2M4.500 5.500h2V10M4.500 10h4" stroke="#fff" strokeWidth="1.600" fill="none" /></svg>
                    <span className="pl-[6px] whitespace-nowrap text-[#8a9298]">No Messages</span>
                </div>
                <div className={`flex min-w-0 flex-1 items-center border-r border-[#9cc5dd] pl-[3px] ${bar}`}>
                    <span className={`h-5 pr-2 ${grip}`} />
                    <span>ROOT - Root sheet 1</span>
                </div>
                <div className={`flex w-[323px] shrink-0 items-center pl-[3px] ${bar}`}>
                    <span className={`h-5 pr-[6px] ${grip}`} />
                    <span className="w-[26px]">x:</span>
                    <span className="w-[43px]">-2100.0</span>
                    <span className="w-[27px]">y:</span>
                    <span>-7900.0</span>
                </div>
            </footer>

            {/* Windows taskbar */}
            <div className="flex h-[22px] shrink-0 items-start overflow-hidden bg-linear-to-r from-[#351a1c] via-[#26191b] to-[#30191a] font-['Open_Sans',sans-serif]">
                <button type="button" aria-label="Start" className="flex h-10 w-11 shrink-0 items-center justify-center bg-[#1d1d1f] pr-1">
                    <svg width="17" height="17" viewBox="0 0 17 17" fill="#fff"><path d="M0 2.500L7 1.500V8H0zM8 1.400L17 0v8H8zM0 9h7v6.500L0 14.500zM8 9h9v8l-9-1.300z" /></svg>
                </button>
                <label className="flex h-10 w-[288px] shrink-0 items-center gap-[11px] border border-[#555] bg-[#333] pl-4">
                    <svg width="13" height="18" viewBox="0 0 13 18" fill="none" stroke="#e8e8e8" strokeWidth="1.500"><circle cx="7" cy="6" r="5" /><path d="M4 10L0 16" /></svg>
                    <input aria-label="Search" placeholder="Type here to search" className="w-full bg-transparent text-sm placeholder:text-[#c9c9c9]" />
                </label>
                <div className="flex h-10 items-center">
                    <button type="button" aria-label="Task View" className="flex w-[50px] justify-center"><svg width="18" height="18" viewBox="0 0 18 18" fill="none" stroke="#fff"><path d="M1 0v3h11V0M1 6h11v7H1zM1 18v-3h11v3M16 5v13" /><path d="M15 1h2v2h-2z" fill="#fff" /></svg></button>
                    <button type="button" aria-label="Chrome" className="flex w-[49px] justify-center"><svg width="22" height="22" viewBox="0 0 22 22"><circle cx="11" cy="11" r="11" fill="#3a9e4a" /><path d="M11 11L1.500 5.500A11 11 0 0 1 20.500 5.500z" fill="#e33b2e" /><path d="M11 6h9.700A11 11 0 0 1 11 22l5-9z" fill="#f8c62c" /><circle cx="11" cy="11" r="6" fill="#fff" /><circle cx="11" cy="11" r="4.500" fill="#2f7de1" /></svg></button>
                    <button type="button" aria-label="File Explorer" className="flex w-[49px] justify-center"><svg width="22" height="18" viewBox="0 0 22 18"><path d="M0 0h9l2 3h-11z" fill="#d99a1e" /><path d="M0 3h9l2-2h11v17H0z" fill="#f5cd62" /><path d="M4 11h14v7H4z" fill="#4a95b8" /></svg></button>
                    <button type="button" aria-label="Store" className="flex w-[49px] justify-center"><svg width="24" height="24" viewBox="0 0 24 24"><path d="M1 6h22v18H1z" fill="#fff" /><path d="M7 6V2h11v4" fill="none" stroke="#28a8e8" strokeWidth="2" /><path d="M7 11h4v4H7z" fill="#e84f28" /><path d="M13 11h4v4h-4z" fill="#7db82c" /><path d="M7 17h4v4H7z" fill="#28a8e8" /><path d="M13 17h4v4h-4z" fill="#f8b82c" /></svg></button>
                    {['WhatsApp', 'WhatsApp Business'].map((name) => (
                        <button key={name} type="button" aria-label={name} className="flex w-[49px] justify-center"><svg width="24" height="24" viewBox="0 0 24 24"><circle cx="12" cy="12" r="11" fill="#3fc25a" stroke="#f4f4f4" strokeWidth="2" /><path d="M8 6q-3 3 1 7t8 4l1-3-3-1.500-1.500 1.500q-3-1-4-4L11 9 9.500 6z" fill="#fff" /></svg></button>
                    ))}
                    <button type="button" aria-label="Proteus" className="flex h-10 w-12 items-center justify-center bg-[#5a4c4d]"><svg width="24" height="20" viewBox="0 0 24 20" fill="none"><path d="M5 0l2 8M18 0l-2 8M1 9q5-3 8 2M23 9q-5-3-8 2" stroke="#a3a8b0" strokeWidth="1.500" /><circle cx="5" cy="1" r="1.500" fill="#d8a838" /><circle cx="18" cy="1" r="1.500" fill="#d8a838" /><circle cx="12" cy="11" r="6" fill="#23497e" /></svg></button>
                </div>
                <div className="ml-auto flex h-10 items-center gap-2 whitespace-nowrap text-white">
                    <svg width="20" height="20" viewBox="0 0 20 20" aria-hidden="true"><circle cx="10" cy="10" r="10" fill="#f09a24" /></svg>
                    <span>35</span>
                </div>
            </div>
        </div>
    );
};

export default App;
